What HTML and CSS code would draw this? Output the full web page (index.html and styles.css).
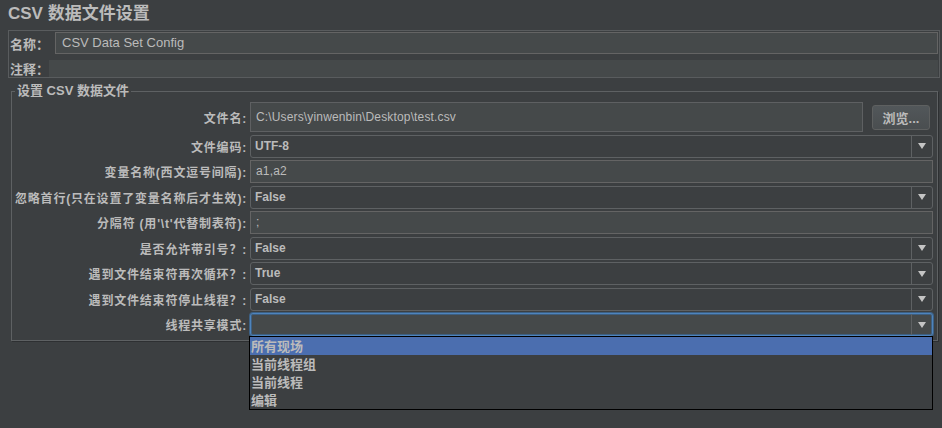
FILE: index.html
```html
<!DOCTYPE html>
<html lang="zh">
<head>
<meta charset="utf-8">
<title>CSV 数据文件设置</title>
<link rel="stylesheet" href="styles.css">
</head>
<body>
<div class="title">CSV 数据文件设置</div>
<div class="info">
  <div class="info-row name-row">
    <span class="info-label name-label">名称：</span>
    <div class="tf name-field">CSV Data Set Config</div>
  </div>
  <div class="info-row comment-row">
    <span class="info-label comment-label">注释：</span>
    <div class="comment-field"></div>
  </div>
</div>
<fieldset class="group">
  <legend>设置 CSV 数据文件</legend>
  <div class="form">
    <label class="lbl">文件名:</label>
    <div class="file-row">
      <div class="tf file-field">C:\Users\yinwenbin\Desktop\test.csv</div>
      <button class="btn">浏览...</button>
    </div>

    <label class="lbl">文件编码:</label>
    <div class="combo"><span class="combo-value">UTF-8</span><span class="combo-arrow"><i class="tri"></i></span></div>

    <label class="lbl">变量名称(西文逗号间隔):</label>
    <div class="tf">a1,a2</div>

    <label class="lbl">忽略首行(只在设置了变量名称后才生效):</label>
    <div class="combo"><span class="combo-value">False</span><span class="combo-arrow"><i class="tri"></i></span></div>

    <label class="lbl">分隔符 (用'\t'代替制表符):</label>
    <div class="tf">;</div>

    <label class="lbl">是否允许带引号？:</label>
    <div class="combo"><span class="combo-value">False</span><span class="combo-arrow"><i class="tri"></i></span></div>

    <label class="lbl">遇到文件结束符再次循环？:</label>
    <div class="combo"><span class="combo-value">True</span><span class="combo-arrow"><i class="tri"></i></span></div>

    <label class="lbl">遇到文件结束符停止线程？:</label>
    <div class="combo"><span class="combo-value">False</span><span class="combo-arrow"><i class="tri"></i></span></div>

    <label class="lbl">线程共享模式:</label>
    <div class="combo combo-focus">
      <span class="combo-value"></span><span class="combo-arrow"><i class="tri"></i></span>
      <ul class="popup">
        <li class="item selected">所有现场</li>
        <li class="item">当前线程组</li>
        <li class="item">当前线程</li>
        <li class="item">编辑</li>
      </ul>
    </div>
  </div>
</fieldset>
</body>
</html>
```

FILE: styles.css
```css
html, body {
  margin: 0;
  padding: 0;
  background: #3c3f41;
}
body {
  width: 942px;
  height: 428px;
  overflow: hidden;
  color: #bbbbbb;
  font-family: "Liberation Sans", "Noto Sans CJK SC", sans-serif;
  font-size: 12px;
}
.title {
  height: 30px;
  line-height: 28px;
  padding-left: 8px;
  font-size: 17px;
  font-weight: bold;
  box-sizing: border-box;
}
.info {
  margin: 0 2px 0 8px;
  border: 1px solid #595c5e;
  height: 48px;
  box-sizing: border-box;
  padding: 1px 1px 0 0;
}
.info-row {
  display: flex;
  align-items: center;
}
.info-label {
  font-weight: bold;
  font-size: 13px;
  padding-left: 1px;
  box-sizing: border-box;
  white-space: nowrap;
}
.name-label { width: 46px; }
.comment-label { width: 40px; }
.name-row { height: 22px; }
.comment-row { height: 17px; margin-top: 6px; }
.tf {
  background: #45494a;
  border: 1px solid #646464;
  box-sizing: border-box;
  height: 23px;
  line-height: 21px;
  padding-left: 5px;
  color: #bbbbbb;
  white-space: nowrap;
  overflow: hidden;
  letter-spacing: 0.15px;
}
.name-field {
  flex: 1;
  height: 22px;
  line-height: 20px;
  padding-left: 6px;
  font-size: 13px;
  letter-spacing: 0;
}
.comment-field {
  flex: 1;
  height: 17px;
  background: #45494a;
}
.group {
  margin: 5px 4px 0 11px;
  padding: 3px 4px 4px 0;
  border: 1px solid #5e6163;
  box-shadow: 1px 1px 0 #2e3032;
  min-width: 0;
}
.group legend {
  margin-left: 3px;
  padding: 0 2px;
  font-size: 13px;
  font-weight: bold;
  line-height: 16px;
}
.form {
  display: grid;
  grid-template-columns: 235px 1fr;
  column-gap: 3px;
  grid-template-rows: 30px repeat(8, 23px);
  row-gap: 2.5px;
}
.lbl {
  text-align: right;
  font-weight: bold;
  font-size: 12px;
  white-space: nowrap;
  align-self: center;
  letter-spacing: 0.8px;
}
.file-row {
  display: flex;
  align-items: center;
}
.file-field {
  flex: 1;
  height: 30px;
  line-height: 28px;
  padding-left: 5px;
  border-color: #5e6062;
}
.btn {
  width: 58px;
  height: 25px;
  margin: 0 3px 0 9px;
  padding: 0;
  border: 1px solid #5e6060;
  border-radius: 3px;
  background: linear-gradient(#52575a, #4a4e50);
  color: #bbbbbb;
  font-family: "Liberation Sans", "Noto Sans CJK SC", sans-serif;
  font-size: 13px;
  font-weight: bold;
}
.combo {
  position: relative;
  display: flex;
  border: 1px solid #5e6163;
  border-radius: 3px;
  background: #3c3f41;
  box-sizing: border-box;
  height: 23px;
}
.combo-value {
  flex: 1;
  padding-left: 4px;
  line-height: 21px;
  font-weight: bold;
  font-size: 12px;
}
.combo-arrow {
  width: 20px;
  border-left: 1px solid #5e6163;
  display: flex;
  align-items: center;
  justify-content: center;
}
.tri {
  width: 0;
  height: 0;
  border-left: 4px solid transparent;
  border-right: 4px solid transparent;
  border-top: 6px solid #c4c4c4;
}
.combo-focus {
  background: #45494a;
  border-color: #4e84bd;
  box-shadow: 0 0 0 1px #3d6185, inset 0 0 0 1px #3e5f80;
}
.popup {
  position: absolute;
  top: calc(100% + 1px);
  left: -2px;
  right: -1px;
  margin: 0;
  padding: 0;
  list-style: none;
  background: #3c3f41;
  border: 1px solid #000000;
  z-index: 2;
}
.item {
  height: 18px;
  line-height: 20px;
  overflow: hidden;
  padding-left: 1px;
  font-size: 13px;
  font-weight: bold;
  color: #bbbbbb;
}
.item.selected {
  background: #4b6eaf;
}
```
